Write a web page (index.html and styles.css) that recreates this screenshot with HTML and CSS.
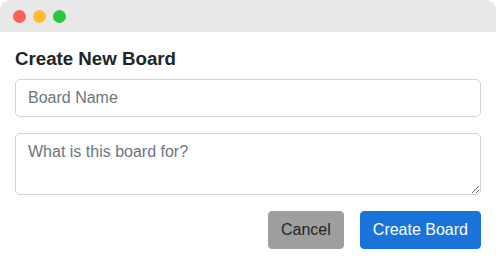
FILE: index.html
```html
<!DOCTYPE html>
<html lang="en">
<head>
<meta charset="utf-8">
<title>Create New Board</title>
<link rel="stylesheet" href="styles.css">
</head>
<body>
<div class="window">
  <div class="titlebar">
    <span class="dot dot-red"></span>
    <span class="dot dot-yellow"></span>
    <span class="dot dot-green"></span>
  </div>
  <div class="content">
    <h5 class="title">Create New Board</h5>
    <input class="field" type="text" placeholder="Board Name">
    <textarea class="field area" rows="2" placeholder="What is this board for?"></textarea>
    <div class="actions">
      <button class="btn btn-cancel" type="button">Cancel</button>
      <button class="btn btn-primary" type="button">Create Board</button>
    </div>
  </div>
</div>
</body>
</html>
```
FILE: styles.css
```css
* { box-sizing: border-box; }
html, body { margin: 0; padding: 0; background: #ffffff; }
body {
  font-family: "Liberation Sans", Arial, sans-serif;
  color: #212529;
}
.window {
  width: 496px;
  height: 264px;
  background: #ffffff;
  border-radius: 10px;
  overflow: hidden;
  box-shadow: inset 0 0 0 1px rgba(0,0,0,0.015);
  display: flex;
  flex-direction: column;
}
.titlebar {
  height: 32px;
  background: #e8e8e8;
  display: flex;
  align-items: center;
  gap: 7px;
  padding: 1px 0 0 13px;
}
.dot {
  width: 13px;
  height: 13px;
  border-radius: 50%;
  display: block;
}
.dot-red { background: #fe5f57; }
.dot-yellow { background: #febc2e; }
.dot-green { background: #28c840; }
.content {
  padding: 15px;
  display: flex;
  flex-direction: column;
}
.title {
  margin: 0 0 8px;
  font-size: 18.7px;
  line-height: 24px;
  font-weight: 700;
  color: #212529;
}
.field {
  display: block;
  width: 100%;
  font-family: inherit;
  font-size: 16px;
  line-height: 24px;
  padding: 6px 12px;
  border: 1px solid #ced4da;
  border-radius: 5px;
  color: #212529;
  background: #fff;
  margin: 0 0 16px;
  height: 38px;
}
.field::placeholder { color: #6c757d; opacity: 1; }
.area {
  height: 62px;
  resize: vertical;
}
.actions {
  display: flex;
  justify-content: flex-end;
  gap: 16px;
}
.btn {
  font-family: inherit;
  font-size: 16px;
  line-height: 24px;
  padding: 6px 12px;
  border: 1px solid transparent;
  border-radius: 4px;
  height: 38px;
  cursor: pointer;
}
.btn-cancel { background: #9e9e9e; border-color: #9e9e9e; color: #212529; }
.btn-primary { background: #1a73d8; border-color: #1a73d8; color: #ffffff; }
```
